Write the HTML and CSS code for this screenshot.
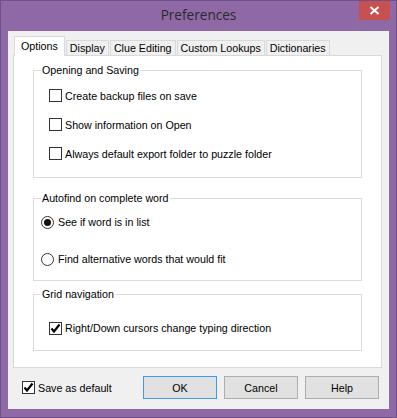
FILE: index.html
```html
<!DOCTYPE html>
<html lang="en">
<head>
    <meta charset="UTF-8">
    <title>Preferences</title>
    <link rel="stylesheet" href="styles.css">
</head>
<body>
    <div class="window">
        <div class="titlebar">
            <span class="title">Preferences</span>
            <div class="close">
                <svg width="11" height="9" viewBox="0 0 11 9">
                    <path d="M1.5 1 L9.5 8 M9.5 1 L1.5 8" stroke="#fff" stroke-width="2" fill="none"/>
                </svg>
            </div>
        </div>
        <div class="client">
            <div class="tabs">
                <div class="tab active">Options</div>
                <div class="tab">Display</div>
                <div class="tab">Clue Editing</div>
                <div class="tab">Custom Lookups</div>
                <div class="tab">Dictionaries</div>
            </div>
            <div class="panel">
                <fieldset class="group group-open">
                    <legend>Opening and Saving</legend>
                    <label class="row"><span class="check"></span>Create backup files on save</label>
                    <label class="row"><span class="check"></span>Show information on Open</label>
                    <label class="row"><span class="check"></span>Always default export folder to puzzle folder</label>
                </fieldset>
                <fieldset class="group group-find">
                    <legend>Autofind on complete word</legend>
                    <label class="row radio-row"><span class="radio on"></span>See if word is in list</label>
                    <label class="row radio-row"><span class="radio"></span>Find alternative words that would fit</label>
                </fieldset>
                <fieldset class="group group-grid">
                    <legend>Grid navigation</legend>
                    <label class="row">
                        <span class="check">
                            <svg width="11" height="11" viewBox="0 0 11 11"><path d="M1.5 5.5 L4 8.5 L9.5 1.5" stroke="#000" stroke-width="2.2" fill="none"/></svg>
                        </span>Right/Down cursors change typing direction
                    </label>
                </fieldset>
            </div>
            <div class="footer">
                <label class="row save">
                    <span class="check">
                        <svg width="11" height="11" viewBox="0 0 11 11"><path d="M1.5 5.5 L4 8.5 L9.5 1.5" stroke="#000" stroke-width="2.2" fill="none"/></svg>
                    </span>Save as default
                </label>
                <div class="buttons">
                    <button class="btn default">OK</button>
                    <button class="btn">Cancel</button>
                    <button class="btn">Help</button>
                </div>
            </div>
        </div>
    </div>
</body>
</html>
```

FILE: styles.css
```css
body {
    margin: 0;
    font-family: "Liberation Sans", Arial, sans-serif;
    font-size: 10.7px;
    color: #000;
}
.window {
    width: 397px;
    height: 418px;
    box-sizing: border-box;
    background: #8e69a5;
    border: 1px solid #6f5089;
    padding: 0 7px 8px 7px;
    display: flex;
    flex-direction: column;
}
.titlebar {
    height: 30px;
    display: grid;
    grid-template-columns: 1fr auto 1fr;
}
.title {
    grid-column: 2;
    font-family: "Open Sans", "Noto Sans", sans-serif;
    font-size: 13.6px;
    color: #2a2a2a;
    padding-top: 4px;
}
.close {
    grid-column: 3;
    justify-self: end;
    width: 31px;
    height: 19px;
    margin-right: -1px;
    background: #c75050;
    display: flex;
    align-items: center;
    justify-content: center;
}
.client {
    flex: 1;
    background: #f0f0f0;
    padding: 5px 7px 0 5px;
    display: flex;
    flex-direction: column;
}
.tabs {
    display: flex;
    align-items: flex-end;
    height: 19px;
    padding-left: 1px;
    position: relative;
    z-index: 1;
}
.tab {
    height: 15px;
    line-height: 14px;
    box-sizing: border-box;
    padding: 0 3px;
    border: 1px solid #d9d9d9;
    border-bottom: none;
    background: #f0f0f0;
    margin-left: 1px;
    text-align: center;
}
.tab.active {
    height: 20px;
    line-height: 19px;
    margin-left: 0;
    padding: 0 6px;
    background: #fff;
    margin-bottom: -1px;
}
.panel {
    height: 313px;
    box-sizing: border-box;
    background: #fff;
    border: 1px solid #d9d9d9;
    padding: 8px 19px 0 19px;
    display: flex;
    flex-direction: column;
}
.group {
    margin: 0;
    border: 1px solid #dcdcdc;
    padding: 0 0 0 15px;
}
.group legend {
    line-height: 13px;
    padding: 0 1px;
    margin-left: -8px;
}
.group-open {
    padding-top: 4px;
    padding-bottom: 9px;
}
.group-open .row {
    height: 29px;
}
.group-find {
    margin-top: 14px;
    padding: 6px 0 10px 7px;
    gap: 15px;
    display: flex;
    flex-direction: column;
}
.group-find legend {
    margin-left: 0;
}
.group-grid {
    margin-top: 7px;
    padding-top: 16px;
    padding-bottom: 11px;
}
.row {
    display: flex;
    align-items: center;
    height: 22px;
}
.check {
    width: 13px;
    height: 13px;
    box-sizing: border-box;
    border: 1px solid #333;
    background: #fff;
    margin-right: 3px;
    display: flex;
    align-items: center;
    justify-content: center;
}
.radio {
    width: 13px;
    height: 13px;
    box-sizing: border-box;
    border: 1px solid #333;
    border-radius: 50%;
    background: #fff;
    margin-right: 4px;
    display: flex;
    align-items: center;
    justify-content: center;
}
.radio.on::after {
    content: "";
    width: 7px;
    height: 7px;
    border-radius: 50%;
    background: #111;
}
.footer {
    display: flex;
    align-items: flex-start;
    padding: 8px 0 0 9px;
}
.save {
    height: 23px;
}
.buttons {
    margin-left: auto;
    display: flex;
    gap: 7px;
    padding-right: 3px;
}
.btn {
    width: 74px;
    height: 23px;
    font-family: "Liberation Sans", Arial, sans-serif;
    font-size: 10.7px;
    color: #000;
    background: #e1e1e1;
    border: 1px solid #adadad;
    padding: 0;
}
.btn.default {
    border-color: #3c9cf0;
}
```
